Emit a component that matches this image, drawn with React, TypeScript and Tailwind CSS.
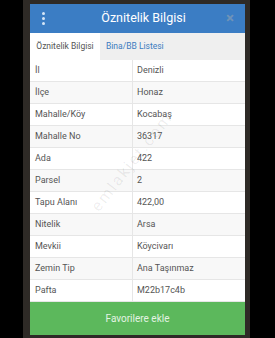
const rows: [string, string][] = [
  ['İl', 'Denizli'],
  ['İlçe', 'Honaz'],
  ['Mahalle/Köy', 'Kocabaş'],
  ['Mahalle No', '36317'],
  ['Ada', '422'],
  ['Parsel', '2'],
  ['Tapu Alanı', '422,00'],
  ['Nitelik', 'Arsa'],
  ['Mevkii', 'Köycivarı'],
  ['Zemin Tip', 'Ana Taşınmaz'],
  ['Pafta', 'M22b17c4b'],
];

export default function App() {
  return (
    <div
      className="flex h-[338px] w-[275px] overflow-hidden bg-black"
      style={{ fontFamily: 'Roboto, "Noto Sans", sans-serif' }}
    >
      <div className="ml-[23px] flex h-full w-[227px] flex-col bg-[#2e2a26] pl-[7px] pr-[5px] pt-[4px]">
        <div className="relative flex w-[215px] flex-col bg-white">
          {/* header */}
          <div className="flex h-[29px] items-center bg-[#3b7dc4]">
            <div className="flex w-[26px] flex-col items-center gap-[2px] pl-[1px]">
              <span className="h-[3px] w-[3px] rounded-full bg-[#d6e6f7]" />
              <span className="h-[3px] w-[3px] rounded-full bg-[#d6e6f7]" />
              <span className="h-[3px] w-[3px] rounded-full bg-[#d6e6f7]" />
            </div>
            <div className="flex-1 pl-[12px] text-center text-[12.5px] text-white">Öznitelik Bilgisi</div>
            <div className="w-[26px] pr-[4px] text-center text-[15px] font-bold leading-none text-[#6f93b8]">×</div>
          </div>

          {/* tabs */}
          <div className="flex h-[27px] bg-[#efefef] text-[8.5px]">
            <div className="flex w-[70px] items-center justify-center bg-white text-[#555]">Öznitelik Bilgisi</div>
            <div className="flex items-center pl-[6px] text-[#3c7cc0]">Bina/BB Listesi</div>
          </div>

          {/* table */}
          <div className="text-[9px] text-[#555]">
            {rows.map(([k, v], i) => (
              <div
                key={k}
                className={`grid h-[22px] grid-cols-[103px_1fr] border-b border-[#e6e6e6] ${
                  i % 2 === 1 ? 'bg-[#f8f8f8]' : 'bg-white'
                }`}
              >
                <div className="flex items-center border-r border-[#e6e6e6] pl-[5px]">{k}</div>
                <div className="flex items-center pl-[4px]">{v}</div>
              </div>
            ))}
          </div>

          {/* button */}
          <div className="flex h-[33px] items-center justify-center bg-[#5cb85c] text-[10px] text-[#e3f3e3]">
            Favorilere ekle
          </div>

          {/* watermark */}
          <div className="pointer-events-none absolute left-[102px] top-[158px] -translate-x-1/2 -translate-y-1/2 -rotate-[52deg] whitespace-nowrap text-[16px] tracking-[2px] text-black/[0.07]">
            emlakjet.com
          </div>
        </div>
      </div>
    </div>
  );
}
